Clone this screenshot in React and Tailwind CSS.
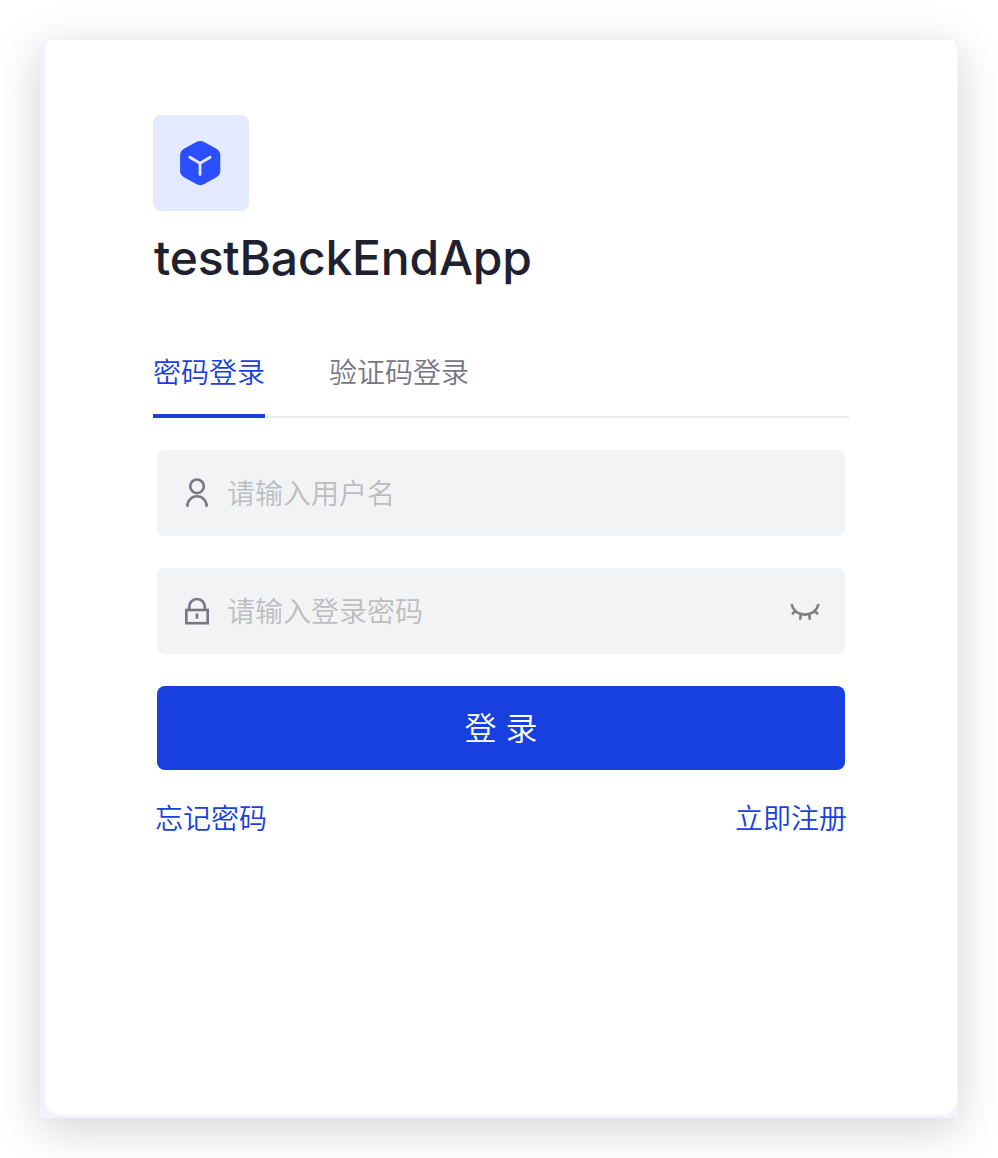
function LogoIcon() {
  return (
    <svg width="96" height="96" viewBox="0 0 96 96" fill="none">
      <path
        d="M43.2 27.1a8 8 0 0 1 8 0l12.2 6.7a7.4 7.4 0 0 1 3.9 6.5v15.5a7.4 7.4 0 0 1-3.9 6.5l-12.2 6.7a8 8 0 0 1-8 0l-12.2-6.7a7.4 7.4 0 0 1-3.9-6.5V40.3a7.4 7.4 0 0 1 3.9-6.5z"
        fill="#2b4eff"
      />
      <path d="M36.9 42.2L47 48.2l10.1-6M47 48.2v11.4" stroke="#e4eaff" strokeWidth="2.8" strokeLinecap="round" strokeLinejoin="round" />
    </svg>
  );
}

function UserIcon() {
  return (
    <svg width="28" height="32" viewBox="0 0 28 32" fill="none" stroke="#767684" strokeWidth="2.6">
      <circle cx="14" cy="9.3" r="6.8" />
      <path d="M4.4 29.8v-.9a9.6 9.6 0 0 1 19.2 0v.9" />
    </svg>
  );
}

function LockIcon() {
  return (
    <svg width="28" height="32" viewBox="0 0 28 32" fill="none" stroke="#767684" strokeWidth="2.6">
      <rect x="3.3" y="15" width="21.4" height="13.2" />
      <path d="M6.2 15v-3.2a7.8 7.8 0 0 1 15.6 0V15M14 18.6v5.2" />
    </svg>
  );
}

function ClosedEyeIcon() {
  return (
    <svg width="32" height="20" viewBox="0 0 32 20" fill="none" stroke="#808080" strokeWidth="2.6">
      <path d="M2.4 3.2C4.4 10 9.2 13.6 16 13.6S27.6 10 29.6 3.2" />
      <path d="M6.4 10l-3.4 3.2M12 13l-1 5.8M20 13l1 5.8M25.6 10l3.4 3.2" />
    </svg>
  );
}

function Field({ icon, placeholder, type, trailing }) {
  return (
    <label className="flex h-[86px] items-center rounded-lg bg-[#f2f3f5] pl-[26px] pr-6">
      {icon}
      <input
        type={type}
        placeholder={placeholder}
        className="ml-4 min-w-0 flex-1 bg-transparent pt-0.5 text-[28px] font-[350] text-[#1d2130] outline-none placeholder:text-[#bcbdbf]"
      />
      {trailing}
    </label>
  );
}

export default function App() {
  return (
    <main className="h-[1158px] w-[998px] overflow-hidden bg-white p-10 font-['Inter','Noto_Sans_CJK_SC',sans-serif]">
      <div className="h-[1078px] w-[918px] bg-[#f2f3ff] pb-[3px] pl-[5px] pr-px shadow-[0_10px_44px_rgba(0,0,0,0.18)]">
        <div className="h-full overflow-hidden">
          <section className="-mt-1.5 h-[1081px] rounded-2xl bg-white px-[108px] pt-[81px]">
            <div className="size-24 overflow-hidden rounded-lg bg-[#e4eaff]">
              <LogoIcon />
            </div>
            <h1 className="mt-[11px] whitespace-nowrap pl-px text-[48px] font-medium leading-[72px] tracking-[-0.2px] text-[#1d2130]">testBackEndApp</h1>
            <nav className="mt-[42px] flex h-[82px] gap-16 border-b-2 border-[#ebecec] text-[28px] font-[350] leading-[74px]">
              <button className="flex h-[82px] w-28 items-start whitespace-nowrap border-b-4 border-[#183fdf] text-[#183fdf]">密码登录</button>
              <button className="flex h-[82px] w-[140px] items-start whitespace-nowrap text-[#767684]">验证码登录</button>
            </nav>
            <form className="mt-8 flex flex-col gap-8 px-1">
              <Field type="text" placeholder="请输入用户名" icon={<UserIcon />} />
              <Field type="password" placeholder="请输入登录密码" icon={<LockIcon />} trailing={<ClosedEyeIcon />} />
              <button type="button" className="h-[84px] rounded-lg bg-[#183fdf] pt-0.5 text-[32px] font-[350] text-white">登 录</button>
            </form>
            <div className="mt-[29px] flex justify-between px-0.5 text-[28px] font-[350] leading-10 text-[#183fdf]">
              <a>忘记密码</a>
              <a>立即注册</a>
            </div>
          </section>
        </div>
      </div>
    </main>
  );
}
